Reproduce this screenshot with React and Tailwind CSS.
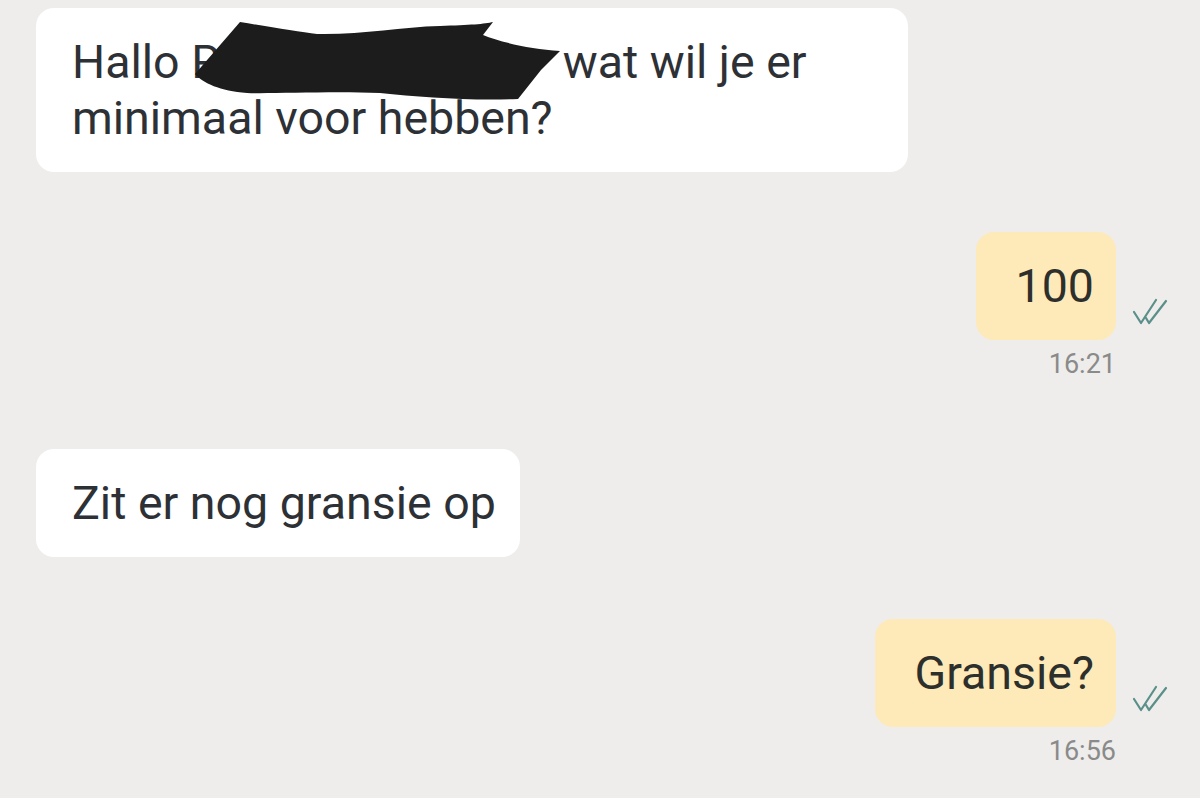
import React from 'react'

const font = { fontFamily: 'Roboto, "Noto Sans", sans-serif' }

function Ticks() {
  return (
    <svg width="38" height="30" viewBox="0 0 38 30" fill="none" className="shrink-0">
      <path d="M2 16 L9 27 L24 4" stroke="#5b8f8a" strokeWidth="2.2" strokeLinecap="round" strokeLinejoin="round" />
      <path d="M14 22 L17 27 L34 5" stroke="#5b8f8a" strokeWidth="2.2" strokeLinecap="round" strokeLinejoin="round" />
    </svg>
  )
}

function Incoming({ children, className = '' }) {
  return (
    <div className={'self-start rounded-[18px] bg-white py-[26px] pl-9 pr-6 text-[46.5px] leading-[56px] text-[#2d3136] ' + className}>
      {children}
    </div>
  )
}

function Outgoing({ text, time, className = '' }) {
  return (
    <div className={'flex flex-col items-end pr-[30px] ' + className}>
      <div className="flex items-end gap-4">
        <div className="rounded-[18px] bg-[#fdeab8] py-[26px] pl-[40px] pr-[22px] text-[46.5px] leading-[56px] text-[#2d2f2c]">
          {text}
        </div>
        <div className="mb-[14px]">
          <Ticks />
        </div>
      </div>
      <div className="mr-[54px] mt-[8px] text-[27px] leading-[32px] text-[#8a8a8a]">{time}</div>
    </div>
  )
}

export default function App() {
  return (
    <div className="flex min-h-[798px] w-[1200px] flex-col bg-[#eeedeb] pl-9 pt-[8px]" style={font}>
      <div className="relative self-start">
        <Incoming className="w-[872px]">
          Hallo R<span className="inline-block w-[343px]"></span>wat wil je er
          <br />
          minimaal voor hebben?
        </Incoming>
        <svg className="absolute left-[-36px] top-[-8px]" width="600" height="110" viewBox="0 0 600 110">
          <path
            d="M195 74 L240 22 C270 27 300 32 317 34 C360 35 400 27 440 26 C470 25 485 24 493 22 L483 35 C500 42 530 49 560 51 L541 70 L518 99 C470 101 420 97 380 93 C330 91 270 94 247 93 C220 91 203 83 195 74 Z"
            fill="#1c1c1c"
          />
        </svg>
      </div>

      <Outgoing text="100" time="16:21" className="mt-[60px]" />

      <Incoming className="mt-[69px]">Zit er nog gransie op</Incoming>

      <Outgoing text="Gransie?" time="16:56" className="mt-[62px]" />
    </div>
  )
}
